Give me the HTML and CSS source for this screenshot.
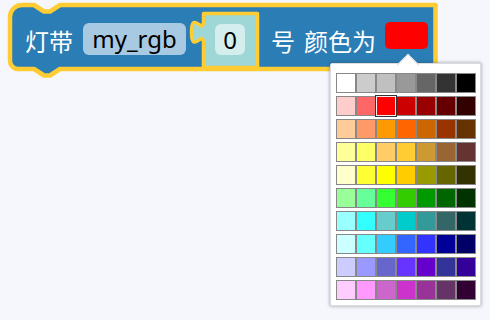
FILE: index.html
```html
<!DOCTYPE html>
<html lang="zh">
<head>
<meta charset="utf-8">
<title>Blockly colour field</title>
<link rel="stylesheet" href="styles.css">
</head>
<body>
<div class="workspace">
  <div class="block">
    <svg class="block-shape" width="440" height="86" viewBox="0 0 440 86" aria-hidden="true">
      <path class="outer" d="M 10,17 A 12,12 0 0 1 22,5 H 34 l 10,6.5 6,0 10,-6.5 H 435.5 V 69 H 60 l -10,6.5 -6,0 -10,-6.5 H 18 A 8,8 0 0 1 10,61 Z"/>
      <path class="inner" d="M 203.5,13.5 H 257.5 V 67.5 H 203.5 V 43.5 c 0,-15 -12,12 -12,-11.25 s 12,3.75 12,-11.25 Z"/>
    </svg>
    <div class="fields">
      <span class="label first">灯带</span>
      <span class="field var">my_rgb</span>
      <span class="field num">0</span>
      <span class="label hao">号</span>
      <span class="label colour-label">颜色为</span>
      <span class="swatch"></span>
    </div>
  </div>

  <div class="dropdown">
    <div class="arrow"></div>
    <div class="palette">
      <div class="prow">
        <span class="cell" style="background:#ffffff"></span><span class="cell" style="background:#cccccc"></span><span class="cell" style="background:#c0c0c0"></span><span class="cell" style="background:#999999"></span><span class="cell" style="background:#666666"></span><span class="cell" style="background:#333333"></span><span class="cell" style="background:#000000"></span>
      </div>
      <div class="prow">
        <span class="cell" style="background:#ffcccc"></span><span class="cell" style="background:#ff6666"></span><span class="cell selected" style="background:#ff0000"></span><span class="cell" style="background:#cc0000"></span><span class="cell" style="background:#990000"></span><span class="cell" style="background:#660000"></span><span class="cell" style="background:#330000"></span>
      </div>
      <div class="prow">
        <span class="cell" style="background:#ffcc99"></span><span class="cell" style="background:#ff9966"></span><span class="cell" style="background:#ff9900"></span><span class="cell" style="background:#ff6600"></span><span class="cell" style="background:#cc6600"></span><span class="cell" style="background:#993300"></span><span class="cell" style="background:#663300"></span>
      </div>
      <div class="prow">
        <span class="cell" style="background:#ffff99"></span><span class="cell" style="background:#ffff66"></span><span class="cell" style="background:#ffcc66"></span><span class="cell" style="background:#ffcc33"></span><span class="cell" style="background:#cc9933"></span><span class="cell" style="background:#996633"></span><span class="cell" style="background:#663333"></span>
      </div>
      <div class="prow">
        <span class="cell" style="background:#ffffcc"></span><span class="cell" style="background:#ffff33"></span><span class="cell" style="background:#ffff00"></span><span class="cell" style="background:#ffcc00"></span><span class="cell" style="background:#999900"></span><span class="cell" style="background:#666600"></span><span class="cell" style="background:#333300"></span>
      </div>
      <div class="prow">
        <span class="cell" style="background:#99ff99"></span><span class="cell" style="background:#66ff99"></span><span class="cell" style="background:#33ff33"></span><span class="cell" style="background:#33cc00"></span><span class="cell" style="background:#009900"></span><span class="cell" style="background:#006600"></span><span class="cell" style="background:#003300"></span>
      </div>
      <div class="prow">
        <span class="cell" style="background:#99ffff"></span><span class="cell" style="background:#33ffff"></span><span class="cell" style="background:#66cccc"></span><span class="cell" style="background:#00cccc"></span><span class="cell" style="background:#339999"></span><span class="cell" style="background:#336666"></span><span class="cell" style="background:#003333"></span>
      </div>
      <div class="prow">
        <span class="cell" style="background:#ccffff"></span><span class="cell" style="background:#66ffff"></span><span class="cell" style="background:#33ccff"></span><span class="cell" style="background:#3366ff"></span><span class="cell" style="background:#3333ff"></span><span class="cell" style="background:#000099"></span><span class="cell" style="background:#000066"></span>
      </div>
      <div class="prow">
        <span class="cell" style="background:#ccccff"></span><span class="cell" style="background:#9999ff"></span><span class="cell" style="background:#6666cc"></span><span class="cell" style="background:#6633ff"></span><span class="cell" style="background:#6600cc"></span><span class="cell" style="background:#333399"></span><span class="cell" style="background:#330099"></span>
      </div>
      <div class="prow">
        <span class="cell" style="background:#ffccff"></span><span class="cell" style="background:#ff99ff"></span><span class="cell" style="background:#cc66cc"></span><span class="cell" style="background:#cc33cc"></span><span class="cell" style="background:#993399"></span><span class="cell" style="background:#663366"></span><span class="cell" style="background:#330033"></span>
      </div>
    </div>
  </div>
</div>
</body>
</html>
```

FILE: styles.css
```css
html, body {
  margin: 0;
  padding: 0;
  background: #f5f7fd;
}

.workspace {
  position: relative;
  width: 490px;
  height: 320px;
  overflow: hidden;
  font-family: "Noto Sans", "Noto Sans CJK SC", sans-serif;
}

.block {
  position: absolute;
  left: 0;
  top: 0;
  width: 440px;
  height: 86px;
}

.block-shape {
  position: absolute;
  left: 0;
  top: 0;
  overflow: visible;
}

.block-shape .outer {
  fill: #2b7db6;
  stroke: #fc3;
  stroke-width: 4.5;
  stroke-linejoin: round;
}

.block-shape .inner {
  fill: #9fd6d6;
  stroke: #fc3;
  stroke-width: 3.5;
  stroke-linejoin: round;
}

.fields {
  position: relative;
  display: flex;
  align-items: center;
  height: 32px;
  padding: 23px 0 0 25px;
  font-size: 24px;
  line-height: 1;
}

.label {
  color: #fff;
  font-family: "Noto Sans CJK SC", sans-serif;
  margin-top: 4px;
  white-space: nowrap;
}

.field {
  display: flex;
  align-items: center;
  justify-content: center;
  color: #000;
  border-radius: 6px;
  font-family: "Noto Sans", "Noto Sans CJK SC", sans-serif;
}

.var {
  margin-left: 10px;
  width: 103px;
  height: 32px;
  background: #a7c9e1;
}

.num {
  align-self: flex-start;
  margin-left: 29px;
  margin-top: 1px;
  width: 30px;
  height: 31px;
  background: #d4eeee;
}

.hao {
  margin-left: 26px;
}

.colour-label {
  margin-left: 9px;
}

.swatch {
  align-self: flex-start;
  margin-left: 9px;
  margin-top: -1px;
  width: 43px;
  height: 27px;
  border-radius: 5px;
  background: #ff0000;
}

.dropdown {
  position: absolute;
  left: 330px;
  top: 63px;
  width: 151px;
  box-sizing: border-box;
  padding: 9px 4px 5px 5px;
  background: #fff;
  border: 1px solid #dadce0;
  border-radius: 2px;
  box-shadow: 0 0 3px 1px rgba(60, 64, 67, 0.3);
}

.arrow {
  position: absolute;
  left: 69px;
  top: -7px;
  width: 16px;
  height: 16px;
  box-sizing: border-box;
  background: #fff;
  border-top: 1px solid #dadce0;
  border-left: 1px solid #dadce0;
  transform: rotate(45deg);
}

.palette {
  position: relative;
  display: flex;
  flex-direction: column;
  gap: 3px;
}

.prow {
  display: flex;
}

.cell {
  display: block;
  width: 20px;
  height: 20px;
  box-sizing: border-box;
  border: 1px solid #888;
}

.cell.selected {
  border-color: #eee;
  outline: 1px solid #333;
  position: relative;
}
```
